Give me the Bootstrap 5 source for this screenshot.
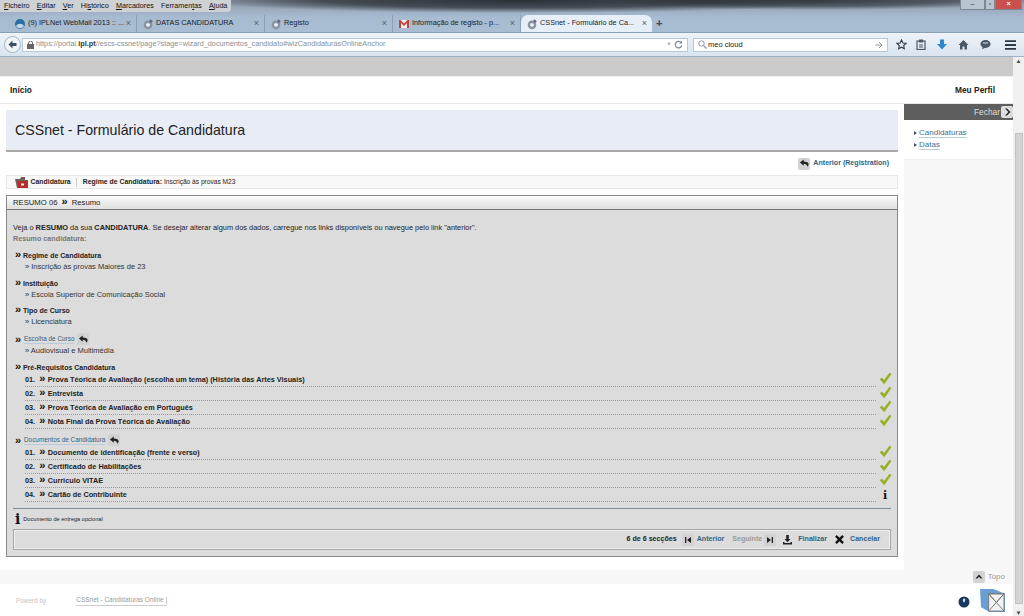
<!DOCTYPE html>
<html lang="pt">
<head>
    <meta charset="UTF-8">
    <meta name="viewport" content="width=device-width, initial-scale=1.0">
    <title>CSSnet - Formulário de Candidatura</title>
    <link rel="stylesheet" href="https://cdn.jsdelivr.net/npm/bootstrap@5.3.2/dist/css/bootstrap.min.css">
    <style>
        html, body { height: 616px; overflow: hidden; }
        body { font-family: "Liberation Sans", Arial, sans-serif; font-size: 7.4px; color: #222; background: #fff; }
        a { color: #2f6283; text-decoration: none; }
        svg { display: block; flex: none; }

        /* browser frame */
        .frame-top { height: 57px; background:
            radial-gradient(ellipse 330px 13px at 520px 0, #2b3036 0, rgba(43,48,54,.75) 60%, rgba(43,48,54,0) 100%),
            radial-gradient(ellipse 220px 10px at 820px 0, #363c44 0, rgba(54,60,68,.7) 60%, rgba(54,60,68,0) 100%),
            linear-gradient(#8d99a8, #a7bbd1 30%, #abc0d6); }
        .menu-row { height: 12px; }
        .menu-items { width: 231px; height: 12px; background: #cfd2d5; border-radius: 0 0 4px 0; gap: 7.2px; padding-left: 4px;
            font-size: 7.2px; line-height: 12px; color: #111; }
        .win-btns { height: 10px; margin-right: 2px; }
        .win-btn { width: 25px; background: #b9c5d1; border: 1px solid #7d8894; border-top: 0; color: #333; font-size: 7px; line-height: 8px; text-align: center; }
        .win-btn.mid { width: 10px; }
        .win-btn.closer { width: 27px; background: #c9504c; color: #fff; font-weight: 700; }
        .tab-row { height: 20px; padding: 3px 0 0 9px; }
        .tab-item { width: 128px; height: 17px; padding: 0 5px; gap: 2px; border-right: 1px solid #8aa0b6;
            font-size: 7.3px; color: #1b2026; }
        .tab-item.current { background: #e6eff8; border: 0; border-radius: 7px 7px 0 0; width: 131px; }
        .tab-label { flex-grow: 1; white-space: nowrap; overflow: hidden; }
        .tab-x { color: #55606c; font-size: 9px; }
        .tool-row { height: 25px; background: linear-gradient(#eef3f9, #d9e4ef); border-top: 1px solid #8aa0b6; padding: 0 4px; gap: 5px; border-bottom: 1px solid #9fb0c0; }
        .round-back { width: 17px; height: 17px; border-radius: 50%; background: #f2f5f8; border: 1px solid #a4b2c0; margin-right: -4px; }
        .url-box { width: 666px; height: 14px; background: #fff; border: 1px solid #b9c8d6; padding: 0 4px; gap: 2px;
            font-size: 7.3px; color: #8a8f94; white-space: nowrap; }
        .url-box b { color: #333; }
        .find-box { width: 195px; height: 14px; background: #fff; border: 1px solid #b9c8d6; padding: 0 4px; gap: 1px;
            font-size: 7.5px; color: #222; }
        .tool-icons { gap: 11px; margin-left: 3px; }
        .tool-clip { margin-left: -2px; }
        .tool-menu { margin-left: 3px; }

        /* page */
        .view-row { height: 559px; }
        .page-col { width: 1013px; }
        .scroll-col { width: 11px; background: #f0f0f0; font-size: 6px; color: #444; }
        .scroll-thumb { width: 8px; height: 471px; margin: 70px auto 0; background: #d4d4d4; border: 1px solid #c2c2c2; }
        .grey-strip { height: 19px; background: #cbcbcb; }
        .top-links { height: 28px; padding: 1px 18px 0 10px; border-bottom: 1px solid #e8e8e8; border-top: 1px solid #eee; font-size: 8.4px; font-weight: 700; color: #222; background: #fff; }
        .page-body { height: 466px; }
        .main-col { width: 904px; padding: 6px 6px 0; background: #fff; }
        .side-col { width: 109px; background: #f7f7f7; }
        .side-head { height: 16px; background: #5e5e5e; color: #ddd; font-size: 8.4px; gap: 1px; }
        .side-list { height: 40px; background: #fff; padding: 7px 0 0 15px; font-size: 8px; line-height: 12px; border-bottom: 1px solid #eee; }
        .side-list a { border-bottom: 1px solid #b9ccdb; color: #43708f; }
        .side-list span { position: relative; }
        .side-list span::before { content: ""; position: absolute; left: -5px; top: 3px; border-left: 3px solid #456; border-top: 2px solid transparent; border-bottom: 2px solid transparent; }
        .title-box { height: 42px; background: #e8edf5; border-bottom: 2px solid #a9a9a9; padding: 1px 0 0 9px; font-size: 14.2px; color: #222; }
        .prev-row { height: 23px; padding-right: 9px; gap: 3px; font-weight: 700; color: #2f6283; }
        .prev-row a { font-size: 7.1px; }
        .icon-chip { width: 12px; height: 12px; background: #d2d2d2; border-radius: 2px; }
        .crumb-box { height: 14px; background: #f8f8f8; border: 1px solid #e8e8e8; padding-left: 7px; font-size: 6.9px; gap: 5.500px; }
        .crumb-box .crumb-icon { margin-right: -4px; }
        .crumb-box .bar { width: 1px; height: 9px; background: #ccc; }
        .crumb-small { font-size: 6.6px; }
        .wizard { height: 362px; margin-top: 6px; border: 1px solid #8a8a8a; background: #dcdcdc; }
        .wizard-head { height: 14px; background: linear-gradient(#fbfbfb, #dedede); border-bottom: 1px solid #777; padding-left: 6px; font-size: 7.7px; line-height: 13px; color: #222; }
        .wizard-head .gg { margin: 0 2px; }
        .wizard-body { padding: 12px 6px 0; line-height: 11px; }
        .sec-note { color: #777; font-weight: 700; font-size: 7.2px; }
        .sec-title { font-weight: 700; padding-left: 2px; color: #222; font-size: 7px; }
        .sec-value { padding-left: 12px; font-size: 7.5px; color: #333; }
        .sec-link { font-size: 6.4px; border-bottom: 1px solid #b9ccdb; line-height: 9px; }
        .gg { display: inline-block; width: 6px; font-weight: 700; font-size: 11px; line-height: 8px; color: #111; }
        .req-line { height: 14px; margin-left: 12px; font-weight: 700; font-size: 7.3px; color: #222; gap: 2px; }
        .req-text { flex-grow: 1; height: 14px; line-height: 13px; border-bottom: 1px dotted #999; white-space: nowrap; }
        .req-text .gg { margin: 0 .5px 0 2px; }
        .ok-slot { width: 12px; margin-left: 1px; }
        .ok-slot svg { margin-top: -3px; }
        .info-mark { font-family: "DejaVu Serif", serif; font-weight: 700; font-size: 11px; line-height: 11px; text-align: center; color: #111; }
        .note-row { border-top: 1px solid #7f8c96; margin-top: 6px; height: 21px; font-size: 5.6px; gap: 3px; padding-left: 2px; color: #222; }
        .note-row .info-mark { font-size: 14px; }
        .foot-bar { height: 21px; background: #dcdcdc; border: 1px solid #a6a6a6; box-shadow: inset 0 0 0 1px #eee; padding-right: 10px; font-weight: 700; font-size: 7.1px; gap: 3px; color: #2f6283; }
        .foot-bar .count { color: #222; margin-right: 2px; }
        .foot-bar .off { color: #999; margin: 0 -1px 0 5px; }
        .foot-bar .wide { margin-left: 3px; margin-right: 2px; }
        .foot-bar a.sp { margin-right: 4px; }
        .foot-bar .wide-r { margin-right: 2px; }
        .band { height: 14px; background: #f7f7f7; padding-right: 8px; gap: 3px; color: #999; font-size: 8px; }
        .foot-row { height: 32px; background: #fff; padding: 1px 0 0 16px; color: #c4c4c4; font-size: 6.4px; position: relative; }
        .foot-row a { margin-left: 30px; color: #999; border-bottom: 1px solid #ccc; font-size: 6.5px; }
        .foot-logo { position: absolute; right: 8px; top: 5px; }
        .foot-globe { position: absolute; right: 43px; top: 12px; }
    </style>
</head>
<body>
<svg width="0" height="0" style="position:absolute">
    <symbol id="ic-back" viewBox="0 0 12 12"><path d="M5.2 1.5 1 5l4.2 3.4V6.2c2.2 0 3.4.8 4 3.3.8-.8 1.3-1.7 1.3-2.6C10.500 4.600 8.300 3.700 5.200 3.700z" fill="#222"/></symbol>
    <symbol id="ic-ok" viewBox="0 0 13 13"><path d="M.8 7.200 3 5.400 5 8 10.500.8 12.500 2 5.200 12.300z" fill="#94b125"/></symbol>
    <symbol id="ic-fav" viewBox="0 0 14 14"><circle cx="7" cy="8" r="5" fill="#8b93a0"/><circle cx="7" cy="8" r="2.200" fill="#eef1f5"/><path d="M9 1.500c2 .5 3 1.500 3.500 3L9 6z" fill="#667"/></symbol>
</svg>

<div class="frame-top">
    <div class="menu-row d-flex justify-content-between">
        <div class="menu-items d-flex">
            <span><u>F</u>icheiro</span><span><u>E</u>ditar</span><span><u>V</u>er</span><span>Hi<u>s</u>tórico</span><span><u>M</u>arcadores</span><span>Ferramen<u>t</u>as</span><span><u>A</u>juda</span>
        </div>
        <div class="win-btns d-flex">
            <div class="win-btn">–</div><div class="win-btn mid">▫</div><div class="win-btn closer">×</div>
        </div>
    </div>
    <div class="tab-row d-flex">
        <div class="tab-item d-flex align-items-center">
            <svg width="12" height="12" viewBox="0 0 12 12"><circle cx="6" cy="6" r="5" fill="#2b6ea3"/><path d="M2 8c2-3 6-3 8 0-2 3-6 3-8 0z" fill="#c7d6e2"/></svg>
            <span class="tab-label">(9) IPLNet WebMail 2013 :: ...</span><span class="tab-x">×</span>
        </div>
        <div class="tab-item d-flex align-items-center">
            <svg width="12" height="12"><use href="#ic-fav"/></svg>
            <span class="tab-label">DATAS CANDIDATURA</span><span class="tab-x">×</span>
        </div>
        <div class="tab-item d-flex align-items-center">
            <svg width="12" height="12"><use href="#ic-fav"/></svg>
            <span class="tab-label">Registo</span><span class="tab-x">×</span>
        </div>
        <div class="tab-item d-flex align-items-center">
            <svg width="12" height="12" viewBox="0 0 12 12"><rect x="1" y="2" width="10" height="8" fill="#eee"/><path d="M1 2v8h2V5l3 3 3-3v5h2V2H9.500L6 5.500 2.500 2z" fill="#c8443a"/></svg>
            <span class="tab-label">Informação de registo - p...</span><span class="tab-x">×</span>
        </div>
        <div class="tab-item current d-flex align-items-center">
            <svg width="12" height="12"><use href="#ic-fav"/></svg>
            <span class="tab-label">CSSnet - Formulário de Ca...</span><span class="tab-x">×</span>
        </div>
        <span class="ms-1 fw-bold" style="font-size:11px;line-height:16px;color:#3c4a58">+</span>
    </div>
    <div class="tool-row d-flex align-items-center">
        <div class="round-back d-flex align-items-center justify-content-center">
            <svg width="11" height="11" viewBox="0 0 11 11"><path d="M5.500 1.500 1.500 5.500l4 4V7h4V4h-4z" fill="#3d5062"/></svg>
        </div>
        <div class="url-box d-flex align-items-center">
            <svg width="7" height="8" viewBox="0 0 7 8"><rect y="3" width="7" height="5" fill="#666"/><path d="M1.500 3V2a2 2 0 0 1 4 0v1" fill="none" stroke="#666"/></svg>
            <span class="flex-grow-1">https://portal.<b>ipl.pt</b>//escs-cssnet/page?stage=wizard_documentos_candidato#wizCandidaturasOnlineAnchor</span>
            <span style="color:#b5bcc3;font-size:6px">▼</span>
            <svg width="9" height="9" viewBox="0 0 9 9"><path d="M7.500 3A3.300 3.300 0 1 0 7.800 5.500" fill="none" stroke="#7b8894" stroke-width="1.200"/><path d="M8 .8V3.600H5.200z" fill="#7b8894"/></svg>
        </div>
        <div class="find-box d-flex align-items-center">
            <svg width="9" height="9" viewBox="0 0 9 9"><circle cx="3.500" cy="3.500" r="2.700" fill="none" stroke="#8b98a5"/><path d="M5.500 5.500 8.500 8.500" stroke="#8b98a5" stroke-width="1.300"/></svg>
            <span class="flex-grow-1">meo cloud</span>
            <svg width="8" height="8" viewBox="0 0 8 8"><path d="M.5 4h6M4 1l3 3-3 3" fill="none" stroke="#8b98a5"/></svg>
        </div>
        <div class="tool-icons d-flex align-items-center">
            <svg width="11" height="11" viewBox="0 0 12 12"><path d="M6 1l1.500 3.300 3.500.4-2.600 2.400.7 3.500L6 8.900l-3.100 1.700.7-3.500L1 4.700l3.500-.4z" fill="none" stroke="#2c3947" stroke-width="1.200"/></svg>
            <svg class="tool-clip" width="10" height="11" viewBox="0 0 10 11"><rect x="1" y="2" width="8" height="8.500" fill="none" stroke="#4a5866" stroke-width="1.200"/><rect x="3" y=".5" width="4" height="3" fill="#4a5866"/><path d="M3 6h4M3 8h4" stroke="#4a5866"/></svg>
            <svg width="10" height="11" viewBox="0 0 10 11"><path d="M3 .5h4V5h3L5 10.500 0 5h3z" fill="#2f86c9"/></svg>
            <svg width="11" height="11" viewBox="0 0 11 11"><path d="M5.500 1 .5 6H2v4.500h2.500V7.500h2v3H9V6h1.500z" fill="#4a5866"/></svg>
            <svg width="11" height="11" viewBox="0 0 11 11"><path d="M5.500 1C2.700 1 .5 2.800.5 5c0 1.300.8 2.400 2 3.100L2.200 10.300 4.700 8.900h.8c2.800 0 5-1.700 5-3.900s-2.200-4-5-4z" fill="#4a5866"/><path d="M3 4h5" stroke="#d9e4ef"/></svg>
            <svg class="tool-menu" width="11" height="10" viewBox="0 0 11 10"><path d="M0 1.200h11M0 5h11M0 8.800h11" stroke="#2c3947" stroke-width="1.800"/></svg>
        </div>
    </div>
</div>

<div class="view-row d-flex">
    <div class="page-col">
        <div class="grey-strip"></div>
        <div class="top-links d-flex justify-content-between align-items-center">
            <a href="#" class="text-reset">Início</a>
            <a href="#" class="text-reset">Meu Perfil</a>
        </div>
        <div class="page-body d-flex">
            <div class="main-col">
                <div class="title-box d-flex align-items-center">CSSnet - Formulário de Candidatura</div>
                <div class="prev-row d-flex justify-content-end align-items-center">
                    <span class="icon-chip d-flex align-items-center justify-content-center"><svg width="11" height="11"><use href="#ic-back"/></svg></span>
                    <a href="#">Anterior (Registration)</a>
                </div>
                <div class="crumb-box d-flex align-items-center">
                    <svg class="crumb-icon" width="15" height="13" viewBox="0 0 15 13"><path d="M1 3h5l1-2h4v3h3v8H3z" fill="#6d5f58"/><rect x="4" y="5" width="10" height="7" fill="#b32d2a"/><rect x="7" y="7.500" width="3" height="2" fill="#eee"/></svg>
                    <b>Candidatura</b><span class="bar"></span>
                    <span><b>Regime de Candidatura:</b> <span class="crumb-small">Inscrição às provas M23</span></span>
                </div>
                <div class="wizard">
                    <div class="wizard-head">RESUMO 06 <span class="gg">&raquo;</span> Resumo</div>
                    <div class="wizard-body">
                        <div>Veja o <b>RESUMO</b> da sua <b>CANDIDATURA</b>. Se desejar alterar algum dos dados, carregue nos links disponíveis ou navegue pelo link "anterior".</div>
                        <div class="sec-note">Resumo candidatura:</div>

                        <div class="sec-title" style="margin-top:6px"><span class="gg">&raquo;</span> Regime de Candidatura</div>
                        <div class="sec-value">» Inscrição às provas Maiores de 23</div>
                        <div class="sec-title" style="margin-top:6px"><span class="gg">&raquo;</span> Instituição</div>
                        <div class="sec-value">» Escola Superior de Comunicação Social</div>
                        <div class="sec-title" style="margin-top:5px"><span class="gg">&raquo;</span> Tipo de Curso</div>
                        <div class="sec-value">» Licenciatura</div>
                        <div class="sec-title d-flex align-items-center" style="margin-top:6px;gap:3px">
                            <span class="gg">&raquo;</span> <a href="#" class="sec-link fw-normal">Escolha de Curso</a>
                            <span class="icon-chip d-flex align-items-center justify-content-center"><svg width="11" height="11"><use href="#ic-back"/></svg></span>
                        </div>
                        <div class="sec-value">» Audiovisual e Multimédia</div>

                        <div class="sec-title" style="margin-top:6px"><span class="gg">&raquo;</span> Pré-Requisitos Candidatura</div>
                        <div class="req-line d-flex align-items-center"><span class="req-text">01. <span class="gg">&raquo;</span> Prova Téorica de Avaliação (escolha um tema) (História das Artes Visuais)</span><span class="ok-slot"><svg width="13" height="13"><use href="#ic-ok"/></svg></span></div>
                        <div class="req-line d-flex align-items-center"><span class="req-text">02. <span class="gg">&raquo;</span> Entrevista</span><span class="ok-slot"><svg width="13" height="13"><use href="#ic-ok"/></svg></span></div>
                        <div class="req-line d-flex align-items-center"><span class="req-text">03. <span class="gg">&raquo;</span> Prova Téorica de Avaliação em Português</span><span class="ok-slot"><svg width="13" height="13"><use href="#ic-ok"/></svg></span></div>
                        <div class="req-line d-flex align-items-center"><span class="req-text">04. <span class="gg">&raquo;</span> Nota Final da Prova Téorica de Avaliação</span><span class="ok-slot"><svg width="13" height="13"><use href="#ic-ok"/></svg></span></div>

                        <div class="sec-title d-flex align-items-center" style="margin-top:5px;height:12px;gap:3px">
                            <span class="gg">&raquo;</span> <a href="#" class="sec-link fw-normal">Documentos de Candidatura</a>
                            <span class="icon-chip d-flex align-items-center justify-content-center"><svg width="11" height="11"><use href="#ic-back"/></svg></span>
                        </div>
                        <div class="req-line d-flex align-items-center"><span class="req-text">01. <span class="gg">&raquo;</span> Documento de identificação (frente e verso)</span><span class="ok-slot"><svg width="13" height="13"><use href="#ic-ok"/></svg></span></div>
                        <div class="req-line d-flex align-items-center"><span class="req-text">02. <span class="gg">&raquo;</span> Certificado de Habilitações</span><span class="ok-slot"><svg width="13" height="13"><use href="#ic-ok"/></svg></span></div>
                        <div class="req-line d-flex align-items-center"><span class="req-text">03. <span class="gg">&raquo;</span> Curriculo VITAE</span><span class="ok-slot"><svg width="13" height="13"><use href="#ic-ok"/></svg></span></div>
                        <div class="req-line d-flex align-items-center"><span class="req-text">04. <span class="gg">&raquo;</span> Cartão de Contribuinte</span><span class="ok-slot info-mark">i</span></div>

                        <div class="note-row d-flex align-items-center"><span class="info-mark">i</span> Documento de entrega opcional</div>
                        <div class="foot-bar d-flex justify-content-end align-items-center">
                            <span class="count">6 de 6 secções</span>
                            <span class="icon-chip d-flex align-items-center justify-content-center"><svg width="8" height="8" viewBox="0 0 8 8"><path d="M1 1v6h1.300V1zM7 1 3 4l4 3z" fill="#222"/></svg></span>
                            <a href="#">Anterior</a>
                            <span class="off">Seguinte</span>
                            <span class="icon-chip d-flex align-items-center justify-content-center"><svg width="8" height="8" viewBox="0 0 8 8"><path d="M7 1v6H5.700V1zM1 1l4 3-4 3z" fill="#222"/></svg></span>
                            <svg class="wide" width="11" height="10" viewBox="0 0 10 10"><path d="M3.700 0h2.600v4H8L5 7.300 2 4h1.700zM.5 7v2.500h9V7H8v1H2V7z" fill="#222"/></svg>
                            <a href="#" class="sp">Finalizar</a>
                            <svg class="wide-r" width="11" height="11" viewBox="0 0 10 10"><path d="M1 2.500 2.500 1 5 3.500 7.500 1 9 2.500 6.500 5 9 7.500 7.500 9 5 6.500 2.500 9 1 7.500 3.500 5z" fill="#111"/></svg>
                            <a href="#">Cancelar</a>
                        </div>
                    </div>
                </div>
            </div>
            <div class="side-col">
                <div class="side-head d-flex justify-content-end align-items-center">Fechar
                    <span class="icon-chip d-flex align-items-center justify-content-center" style="background:#ddd"><svg width="8" height="8" viewBox="0 0 8 8"><path d="M2 .5 5.500 4 2 7.500h2L7.500 4 4 .5z" fill="#222"/></svg></span>
                </div>
                <div class="side-list">
                    <span><a href="#">Candidaturas</a></span><br>
                    <span><a href="#">Datas</a></span>
                </div>
            </div>
        </div>
        <div class="band d-flex justify-content-end align-items-center">
            <span class="icon-chip d-flex align-items-center justify-content-center"><svg width="8" height="8" viewBox="0 0 8 8"><path d="M4 1.500 7.500 5.500H5.600L4 3.800 2.400 5.500H.5z" fill="#222"/></svg></span>
            Topo
        </div>
        <div class="foot-row d-flex align-items-center">
            <span>Powerd by</span>
            <a href="#">CSSnet - Candidaturas Online |</a>
            <svg class="foot-globe" width="12" height="12" viewBox="0 0 12 12"><circle cx="6" cy="6" r="5.500" fill="#17385c"/><path d="M6 2.500c1.500 0 1.800 1.500 1 2.500L6 7 5 5c-.5-1 0-2.500 1-2.500z" fill="#cfe0ec"/></svg>
            <svg class="foot-logo" width="25" height="23" viewBox="0 0 26 24"><path d="M0 0h14l12 5v19H10L1 19z" fill="#6a9fd4"/><rect x="9" y="5" width="16" height="18" fill="#f1f3f5" stroke="#777"/><path d="M9 5l16 18M25 5 9 23M17 14 9 5h16z" fill="none" stroke="#777"/></svg>
        </div>
    </div>
    <div class="scroll-col text-center">
        <div style="height:6px">▲</div>
        <div class="scroll-thumb"></div>
        <div style="margin-top:5px">▼</div>
    </div>
</div>
<script src="https://cdn.jsdelivr.net/npm/bootstrap@5.3.2/dist/js/bootstrap.bundle.min.js"></script>
</body>
</html>
